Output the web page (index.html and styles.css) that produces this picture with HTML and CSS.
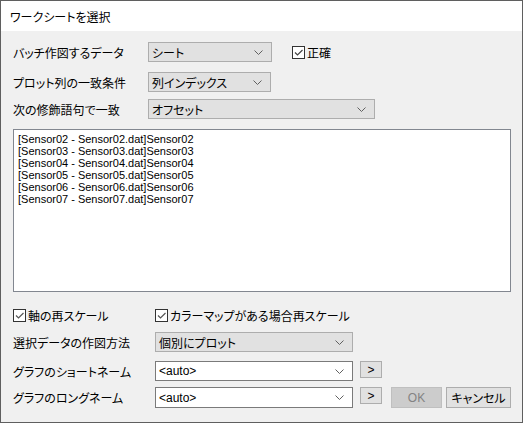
FILE: index.html
```html
<!DOCTYPE html>
<html lang="ja">
<head>
<meta charset="utf-8">
<link rel="stylesheet" href="styles.css">
</head>
<body>
<div class="window">
  <div class="titlebar">ワークシートを選択</div>
  <div class="content">
    <div class="row row1">
      <span class="label top-label">バッチ作図するデータ</span>
      <div class="combo combo-gray w124"><span>シート</span><svg class="chev" width="9" height="5" viewBox="0 0 9 5"><polyline points="0.5,0.5 4.5,4.5 8.5,0.5" fill="none" stroke="#606060" stroke-width="1"/></svg></div>
      <label class="check check-exact"><span class="box dark"><svg width="11" height="11" viewBox="0 0 11 11"><polyline points="2,5.5 4.5,8 9.5,3" fill="none" stroke="#444" stroke-width="1.2"/></svg></span><span>正確</span></label>
    </div>
    <div class="row row2">
      <span class="label top-label">プロット列の一致条件</span>
      <div class="combo combo-gray w123"><span>列インデックス</span><svg class="chev" width="9" height="5" viewBox="0 0 9 5"><polyline points="0.5,0.5 4.5,4.5 8.5,0.5" fill="none" stroke="#606060" stroke-width="1"/></svg></div>
    </div>
    <div class="row row3">
      <span class="label top-label">次の修飾語句で一致</span>
      <div class="combo combo-gray w227"><span>オフセット</span><svg class="chev" width="9" height="5" viewBox="0 0 9 5"><polyline points="0.5,0.5 4.5,4.5 8.5,0.5" fill="none" stroke="#606060" stroke-width="1"/></svg></div>
    </div>
    <div class="listbox">
      <div class="item">[Sensor02 - Sensor02.dat]Sensor02</div>
      <div class="item">[Sensor03 - Sensor03.dat]Sensor03</div>
      <div class="item">[Sensor04 - Sensor04.dat]Sensor04</div>
      <div class="item">[Sensor05 - Sensor05.dat]Sensor05</div>
      <div class="item">[Sensor06 - Sensor06.dat]Sensor06</div>
      <div class="item">[Sensor07 - Sensor07.dat]Sensor07</div>
    </div>
    <div class="row checks">
      <label class="check check-axis"><span class="box"><svg width="11" height="11" viewBox="0 0 11 11"><polyline points="2,5.5 4.5,8 9.5,3" fill="none" stroke="#555" stroke-width="1.2"/></svg></span><span>軸の再スケール</span></label>
      <label class="check"><span class="box"><svg width="11" height="11" viewBox="0 0 11 11"><polyline points="2,5.5 4.5,8 9.5,3" fill="none" stroke="#555" stroke-width="1.2"/></svg></span><span>カラーマップがある場合再スケール</span></label>
    </div>
    <div class="row row5">
      <span class="label bottom-label">選択データの作図方法</span>
      <div class="combo combo-gray w198"><span>個別にプロット</span><svg class="chev" width="9" height="5" viewBox="0 0 9 5"><polyline points="0.5,0.5 4.5,4.5 8.5,0.5" fill="none" stroke="#606060" stroke-width="1"/></svg></div>
    </div>
    <div class="row row6">
      <span class="label bottom-label">グラフのショートネーム</span>
      <div class="combo combo-white w198"><span class="auto">&lt;auto&gt;</span><svg class="chev" width="9" height="5" viewBox="0 0 9 5"><polyline points="0.5,0.5 4.5,4.5 8.5,0.5" fill="none" stroke="#606060" stroke-width="1"/></svg></div>
      <button class="small-btn">&gt;</button>
    </div>
    <div class="row row7">
      <span class="label bottom-label">グラフのロングネーム</span>
      <div class="combo combo-white w198"><span class="auto">&lt;auto&gt;</span><svg class="chev" width="9" height="5" viewBox="0 0 9 5"><polyline points="0.5,0.5 4.5,4.5 8.5,0.5" fill="none" stroke="#606060" stroke-width="1"/></svg></div>
      <button class="small-btn">&gt;</button>
      <button class="btn btn-ok" disabled>OK</button>
      <button class="btn btn-cancel">キャンセル</button>
    </div>
  </div>
</div>
</body>
</html>
```
FILE: styles.css
```css
html, body {
  margin: 0;
  padding: 0;
  background: #ffffff;
}
body {
  font-family: "Noto Sans CJK JP", "Noto Sans", sans-serif;
  font-size: 12px;
  color: #000;
  font-feature-settings: "palt";
}
.window {
  width: 521px;
  height: 421px;
  border: 1px solid #5f5f5f;
  background: #f0f0f0;
  display: flex;
  flex-direction: column;
}
.titlebar {
  height: 30px;
  background: #ffffff;
  padding-left: 9px;
  display: flex;
  align-items: center;
  font-size: 12px;
  letter-spacing: 0;
}
.content {
  flex: 1;
  padding: 11px 11px 0 12px;
  display: flex;
  flex-direction: column;
}
.row {
  display: flex;
  align-items: center;
  height: 20px;
}
.row2 { margin-top: 10px; }
.row3 { margin-top: 7px; }
.label { flex: none; white-space: nowrap; }
.top-label { width: 135px; }
.bottom-label { width: 142px; }
.combo {
  box-sizing: border-box;
  height: 20px;
  border: 1px solid #adadad;
  display: flex;
  align-items: center;
  justify-content: space-between;
  padding: 0 8px 0 3px;
  flex: none;
}
.combo-gray { background: #e1e1e1; }
.combo-white { background: #ffffff; border-color: #7a7a7a; }
.chev { flex: none; }
.w124 { width: 124px; }
.w123 { width: 123px; }
.w227 { width: 227px; }
.w198 { width: 198px; }
.auto {
  font-family: "Liberation Sans", sans-serif;
  font-size: 12px;
}
.check {
  display: flex;
  align-items: center;
  white-space: nowrap;
}
.check-exact { margin-left: 20px; }
.check-axis { width: 142px; }
.box {
  box-sizing: border-box;
  width: 13px;
  height: 13px;
  border: 1px solid #333;
  background: #fff;
  display: flex;
  align-items: center;
  justify-content: center;
  margin-right: 2px;
}
.box svg { display: block; }
.listbox {
  box-sizing: border-box;
  margin-top: 10px;
  width: 498px;
  height: 163px;
  border: 1px solid #828790;
  background: #ffffff;
  padding: 3px 0 0 4px;
  font-family: "Liberation Sans", sans-serif;
  font-size: 11px;
  line-height: 12px;
  font-feature-settings: normal;
}
.item { white-space: nowrap; }
.checks { margin-top: 16px; height: 14px; }
.row5 { margin-top: 10px; }
.row6 { margin-top: 9px; }
.row7 { margin-top: 6px; height: 21px; }
.row7 .combo { height: 21px; }
.small-btn {
  box-sizing: border-box;
  margin-left: 7px;
  width: 22px;
  height: 17px;
  border: 1px solid #adadad;
  background: #e1e1e1;
  font-family: "Liberation Sans", sans-serif;
  font-size: 12px;
  padding: 0;
  line-height: 14px;
  align-self: flex-start;
  color: #000;
}
.btn {
  box-sizing: border-box;
  height: 21px;
  padding: 0;
  font-family: "Noto Sans CJK JP", sans-serif;
  font-size: 12px;
  font-feature-settings: "palt";
}
.btn-ok {
  margin-left: 9px;
  width: 51px;
  background: #cccccc;
  border: 1px solid #bfbfbf;
  color: #838383;
  font-family: "Liberation Sans", sans-serif;
}
.btn-cancel {
  margin-left: 4px;
  width: 65px;
  background: #e1e1e1;
  border: 1px solid #adadad;
  color: #000;
}
```
